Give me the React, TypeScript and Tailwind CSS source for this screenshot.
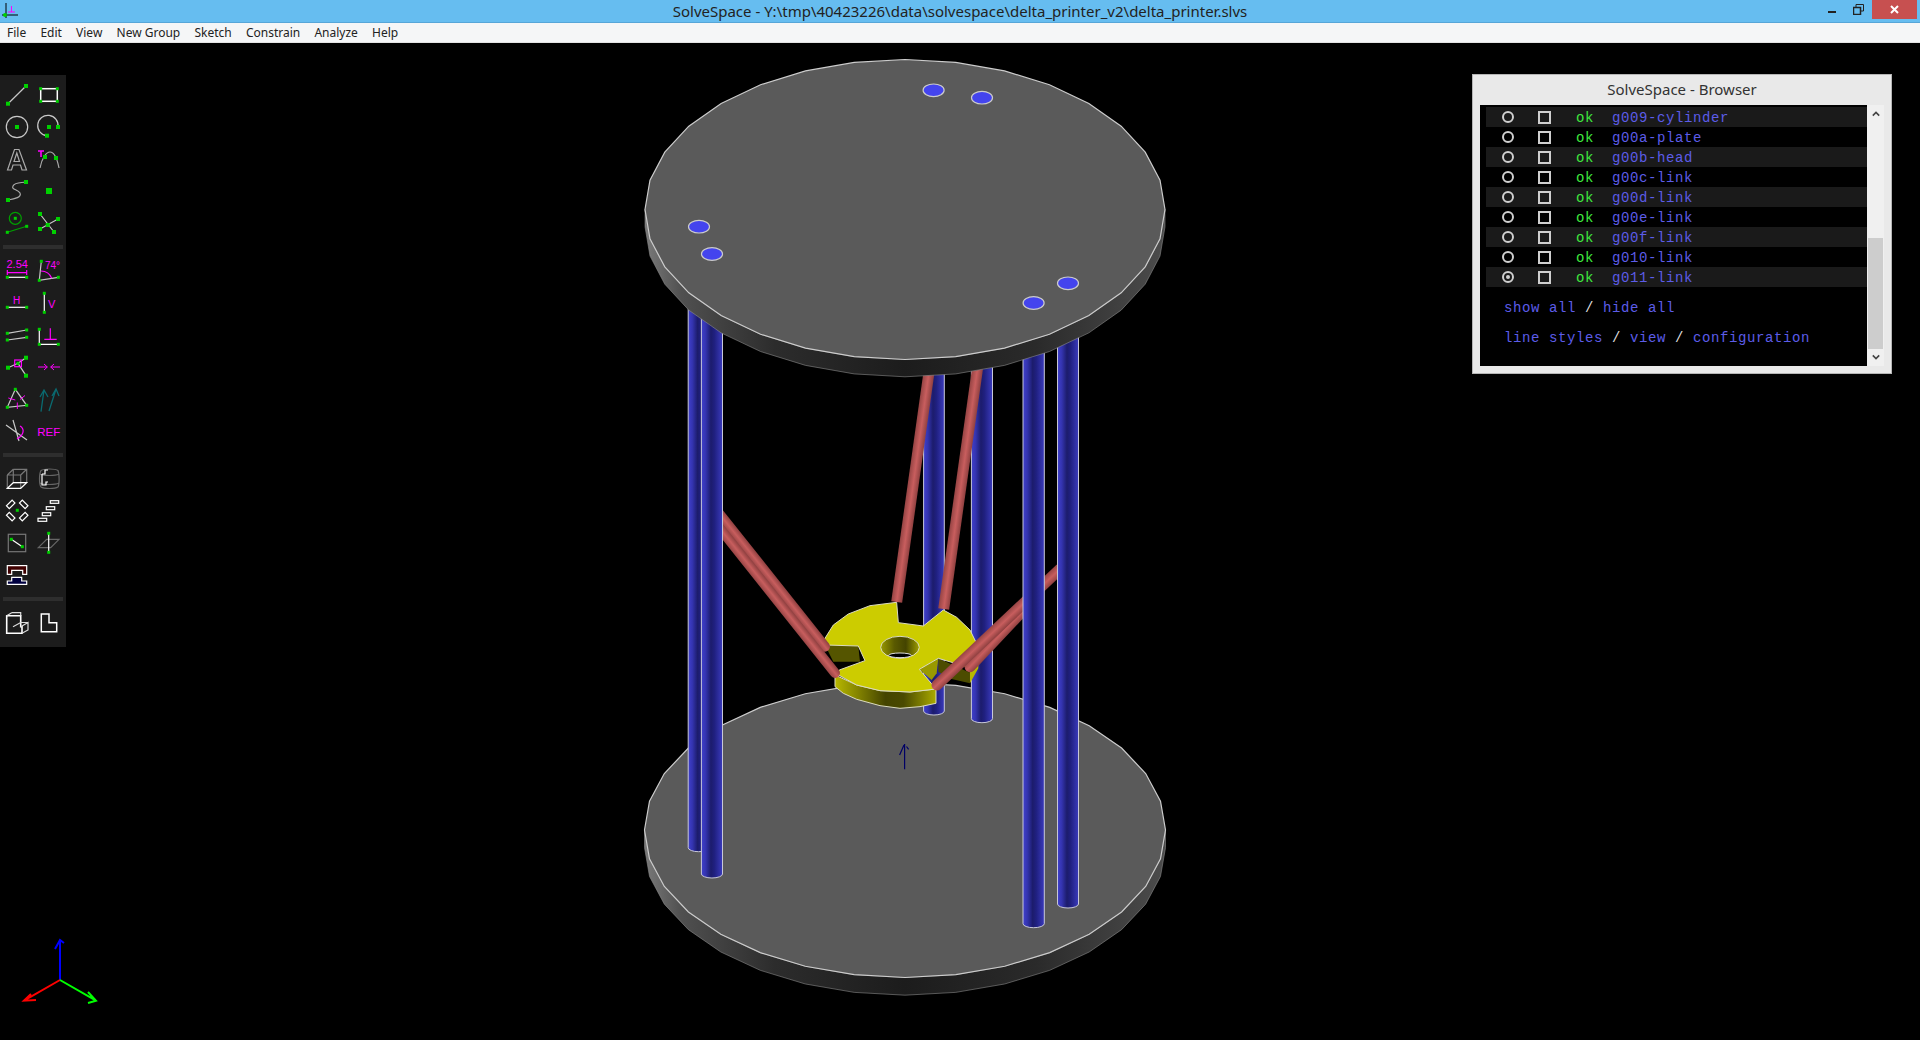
import type { ReactNode } from "react";

const MENUS = ["File", "Edit", "View", "New Group", "Sketch", "Constrain", "Analyze", "Help"];

const GROUPS = [
  "g009-cylinder",
  "g00a-plate",
  "g00b-head",
  "g00c-link",
  "g00d-link",
  "g00e-link",
  "g00f-link",
  "g010-link",
  "g011-link",
];

const GREEN = "#00d000";
const MAGENTA = "#ff00ff";
const LINE = "#c8c8c8";

// small green handle, centered on x,y
function P({ x, y, s = 4 }: { x: number; y: number; s?: number }) {
  return <rect x={x - s / 2} y={y - s / 2} width={s} height={s} fill={GREEN} stroke="none" />;
}

function Icon({ children }: { children: ReactNode }) {
  return (
    <svg viewBox="0 0 32 32" className="w-8 h-8 overflow-visible" fill="none" stroke={LINE} strokeWidth="1.2">
      {children}
    </svg>
  );
}

const sketchIcons = [
  <Icon key="line">
    <path d="M7 24.7 25 7" />
    <P x={7} y={24.7} />
    <P x={25} y={7} />
  </Icon>,
  <Icon key="rect">
    <rect x="7.7" y="9.7" width="16.6" height="12.6" stroke="#fff" strokeWidth="1.5" />
    <P x={7.7} y={9.7} s={3} />
    <P x={24.3} y={9.7} s={3} />
    <P x={7.7} y={22.3} s={3} />
    <P x={24.3} y={22.3} s={3} />
  </Icon>,
  <Icon key="circle">
    <circle cx="16" cy="16" r="10.7" />
    <P x={16} y={16} />
  </Icon>,
  <Icon key="arc">
    <path d="M25 16A10.2 10.2 0 1 0 14 24.7" />
    <P x={16} y={16} />
    <P x={25} y={16} />
    <P x={14} y={24.7} />
  </Icon>,
  <Icon key="text">
    <path d="M6.5 27 13.5 6.5h4.5L25.500 27h-4.500l-1.500-5h-7.500l-1.500 5Z" stroke="#aaa" />
    <path d="M13 18.500h5.500L15.800 10Z" stroke="#aaa" />
  </Icon>,
  <Icon key="image">
    <path d="M7 25C9 15 13 9 17 9S24 15 26 25" stroke="#aaa" />
    <path d="M5 8h6M8 8v6" stroke={MAGENTA} strokeWidth="1.6" />
    <P x={12} y={14} />
    <P x={23} y={15} />
  </Icon>,
  <Icon key="spline">
    <path d="M7 25C14 24 21 22 19 18C17 14 10 15 12 11C14 7 20 8 25 7" stroke="#aaa" />
    <P x={7} y={25} />
    <P x={25} y={7} />
  </Icon>,
  <Icon key="point">
    <P x={16} y={16} s={6} />
  </Icon>,
  <Icon key="workplane">
    <circle cx="14.300" cy="11.300" r="6" stroke="#00a000" />
    <path d="M6.300 25.300 25.700 19.300" stroke="#00a000" />
    <P x={14.3} y={11.3} s={3} />
    <P x={6.3} y={25.3} s={3} />
    <P x={25.7} y={19.3} s={3} />
  </Icon>,
  <Icon key="intersect">
    <path d="M7 7 21 25M25 12 7 22" />
    <P x={7} y={7} />
    <P x={25} y={12} />
    <P x={7} y={22} />
    <P x={21} y={25} />
    <P x={14.7} y={18} />
  </Icon>,
];

const constrainIcons = [
  <Icon key="dist">
    <text x="5.500" y="12" fontSize="11" fill={MAGENTA} stroke="none">2.54</text>
    <path d="M6.300 14v5M25.700 14v5M6.300 16.700h19.400" stroke={MAGENTA} />
    <path d="M6.300 21.300h19.400" stroke="#fff" />
    <P x={6.3} y={21.3} s={3} />
    <P x={25.7} y={21.3} s={3} />
  </Icon>,
  <Icon key="angle">
    <path d="M8.300 5.300 6.300 24.300 25.300 21.300" />
    <path d="M8 15C13 15 17 18 18.700 22.300" stroke={MAGENTA} />
    <text x="12" y="13" fontSize="10" fill={MAGENTA} stroke="none">74°</text>
    <P x={8.3} y={5.3} s={3} />
    <P x={6.3} y={24.3} s={3} />
    <P x={25.3} y={21.3} s={3} />
  </Icon>,
  <Icon key="h">
    <text x="12" y="16" fontSize="10" fill={MAGENTA} stroke="none">H</text>
    <path d="M6.300 19.300h19.400" stroke="#fff" />
    <P x={6.3} y={19.3} s={3} />
    <P x={25.7} y={19.3} s={3} />
  </Icon>,
  <Icon key="v">
    <path d="M11.300 5.300v19" stroke="#fff" />
    <text x="15" y="20" fontSize="11" fill={MAGENTA} stroke="none">V</text>
    <P x={11.3} y={5.3} s={3} />
    <P x={11.3} y={24.3} s={3} />
  </Icon>,
  <Icon key="parallel">
    <path d="M6.300 13.300 25.700 10M6.300 20 25.700 17.300" />
    <P x={6.3} y={13.3} s={3} />
    <P x={25.7} y={10} s={3} />
    <P x={6.3} y={20} s={3} />
    <P x={25.7} y={17.3} s={3} />
  </Icon>,
  <Icon key="perp">
    <path d="M6.300 9.300v15h19" stroke="#fff" />
    <path d="M11.300 19.300h12.400M17.300 8.300v11" stroke={MAGENTA} />
    <P x={6.3} y={9.3} s={3} />
    <P x={6.3} y={24.3} s={3} />
    <P x={25.3} y={24.3} s={3} />
  </Icon>,
  <Icon key="ptline">
    <path d="M7 15.700 17 11.300 25 5.700M17 11.300 25 23.700" />
    <rect x="13.700" y="8" width="6.700" height="6.700" stroke={MAGENTA} />
    <P x={17} y={11.300} s={3} />
    <P x={7} y={15.7} />
    <P x={25} y={5.7} />
    <P x={25} y={23.7} />
  </Icon>,
  <Icon key="same">
    <path d="M5 15h9.300M11 12l3.300 3-3.300 3M27 15h-9.300M21 12l-3.300 3 3.300 3" stroke={MAGENTA} strokeWidth="1" />
  </Icon>,
  <Icon key="symm">
    <path d="M14.300 5.300 6.300 23.300 25.700 21.300Z" />
    <path d="M7.300 14 14.300 16M19 15.500 24 11.500M16.300 18.500v6.500" stroke={MAGENTA} strokeWidth="1" />
    <P x={14.3} y={5.3} s={3} />
    <P x={6.3} y={23.3} s={3} />
    <P x={25.7} y={21.3} s={3} />
  </Icon>,
  <Icon key="orient">
    <path d="M8 27.700 11 6M7 13l4-7 4 7M16 27 23 5.300M19 12l4-7 3 7" stroke="#0a6a70" strokeWidth="1.300" />
  </Icon>,
  <Icon key="other">
    <path d="M5 9 26 24M12 4 18 25" />
    <path d="M19 10C24 13 23 19 16 23" stroke={MAGENTA} />
  </Icon>,
  <Icon key="ref">
    <text x="4.300" y="20" fontSize="11.500" fill={MAGENTA} stroke="none">REF</text>
  </Icon>,
];

const groupIcons = [
  <Icon key="extrude">
    <path d="M12.300 7.300h13.400v13.400M12.300 7.300v13.400h13.400M6.300 13 12.300 7.300M19.700 13 25.700 7.300M6.300 13h13.400v13.300M6.300 13v13.300" stroke="#777" />
    <path d="M6.300 26.300h13.400l6-5.600H12.300Z" stroke="#fff" />
  </Icon>,
  <Icon key="lathe">
    <path d="M8 8.500C11 6.500 22 6.500 25 8.500C26.500 12 26.500 22 25 25C22 27 11 27 8 25C6 22 6 12 8 8.500ZM7 12C11 14 22 14 26 12M7 21C11 23 22 23 26 21" stroke="#666" />
    <path d="M9 12h3v-4h3M9 12v11h4v-3h2" stroke="#fff" />
  </Icon>,
  <Icon key="rotate">
    <g stroke="#fff">
      <rect x="5.700" y="8.300" width="8" height="4" transform="rotate(-45 9.700 10.300)" />
      <rect x="18.700" y="8.300" width="8" height="4" transform="rotate(45 22.700 10.300)" />
      <rect x="5.700" y="20.700" width="8" height="4" transform="rotate(45 9.700 22.700)" />
      <rect x="18.700" y="20.700" width="8" height="4" transform="rotate(-45 22.700 22.700)" />
    </g>
    <P x={16.3} y={16.3} s={3} />
  </Icon>,
  <Icon key="translate">
    <g stroke="#fff">
      <rect x="17.300" y="6.700" width="8.400" height="2.600" />
      <rect x="13.300" y="12.700" width="8.400" height="3" />
      <rect x="9.300" y="18.700" width="8.400" height="3" />
      <rect x="5" y="24.300" width="8.700" height="3" />
    </g>
  </Icon>,
  <Icon key="plane">
    <rect x="7.300" y="8.300" width="17.400" height="17.400" stroke="#777" />
    <path d="M10.300 13.300 21.300 20.700" stroke="#fff" />
    <P x={10.3} y={13.3} s={3} />
    <P x={21.3} y={20.7} s={3} />
  </Icon>,
  <Icon key="normal">
    <path d="M5.300 21.700 13.700 13.300H26L17.700 21.700Z" stroke="#666" />
    <path d="M15.700 7.300v19" stroke="#fff" />
    <P x={15.7} y={7.3} s={3} />
    <P x={15.7} y={26.3} s={3} />
  </Icon>,
  <Icon key="section">
    <path d="M6.300 7.700H25.700V16.300H21.700V12.300H10.700V16.300H6.300Z" fill="#400000" stroke="#fff" />
    <path d="M10.700 19.300H20.700V23H25.700V26.300H6.300V23H10.700Z" fill="#000040" stroke="#fff" />
  </Icon>,
];

const viewIcons = [
  <Icon key="solid">
    <path d="M5.700 8.700H19.700V19.700H21V26.300H5.700Z" stroke="#fff" strokeWidth="1.600" />
    <path d="M10.700 5.700H19.700V8.700M5.700 8.700 10.700 5.700M19.700 19.700 27 15.500V23L21 26.300M12 19.700 19.700 15.500H27" stroke="#ddd" />
  </Icon>,
  <Icon key="shape">
    <path d="M8.300 7H16V15.700H23.700V24.700H8.300Z" stroke="#fff" strokeWidth="1.500" />
  </Icon>,
];

function ToolRow({ icons }: { icons: ReactNode[] }) {
  return <div className="grid grid-cols-2 w-16">{icons}</div>;
}

function Toolbar() {
  return (
    <div className="absolute left-0 top-[32px] w-[66px] h-[572px] bg-[#1c1c1c] pl-px pt-1 font-['Liberation_Sans',sans-serif]">
      <ToolRow icons={sketchIcons} />
      <div className="ml-[2px] w-[60px] h-1 bg-[#2e2e2e] mt-[6px] mb-[7px]" />
      <ToolRow icons={constrainIcons} />
      <div className="ml-[2px] w-[60px] h-1 bg-[#2e2e2e] mt-[5px] mb-[5px]" />
      <ToolRow icons={groupIcons} />
      <div className="ml-[2px] w-[60px] h-1 bg-[#2e2e2e] mt-[7px] mb-[6px]" />
      <ToolRow icons={viewIcons} />
    </div>
  );
}

function BrowserWindow() {
  return (
    <div className="absolute left-[1472px] top-[31px] w-[420px] h-[300px] bg-[#e9e9e9] border border-[#b5b5b5] flex flex-col font-['Noto_Sans',sans-serif]">
      <div className="h-[30px] pb-[2px] flex items-center justify-center text-[15px] text-[#333]">SolveSpace - Browser</div>
      <div className="mx-[7px] h-[261px] flex bg-black font-['Liberation_Mono',monospace] text-[14px] tracking-[0.6px]">
        <div className="flex-1 pt-[2px]">
          {GROUPS.map((name, i) => (
            <div key={name} className={`ml-[6px] h-5 flex items-center ${i % 2 === 0 ? "bg-[#1a1a1a]" : "bg-black"}`}>
              <div className="ml-[16px] w-3 h-3 rounded-full border-2 border-[#cfcfcf] flex items-center justify-center">
                {name === "g011-link" && <div className="w-1 h-1 rounded-full bg-[#cfcfcf]" />}
              </div>
              <div className="ml-[24px] w-[13px] h-[13px] border-2 border-[#cfcfcf]" />
              <span className="ml-[25px] w-9 pt-[2px] text-[#3ee83e]">ok</span>
              <span className="pt-[2px] text-[#5c5ce8]">{name}</span>
            </div>
          ))}
          <div className="mt-[11px] ml-6 h-[20px] leading-[20px] text-[#5c5ce8]">
            show all <span className="text-[#ddd]">/</span> hide all
          </div>
          <div className="mt-[10px] ml-6 h-[20px] leading-[20px] text-[#5c5ce8]">
            line styles <span className="text-[#ddd]">/</span> view <span className="text-[#ddd]">/</span> configuration
          </div>
        </div>
        <div className="w-[17px] bg-[#f0f0f0] flex flex-col items-center justify-between py-[6px] relative">
          <svg viewBox="0 0 10 6" className="w-2 h-[6px]" fill="none" stroke="#444" strokeWidth="2"><path d="M1 5 5 1 9 5" /></svg>
          <div className="absolute left-px top-[133px] w-[15px] h-[111px] bg-[#cdcdcd]" />
          <svg viewBox="0 0 10 6" className="w-2 h-[6px]" fill="none" stroke="#444" strokeWidth="2"><path d="M1 1 5 5 9 1" /></svg>
        </div>
      </div>
    </div>
  );
}

// regular 32-gon flattened to an ellipse, as the solid model tessellates it
function ring(cx: number, cy: number, rx: number, ry: number) {
  return Array.from({ length: 32 }, (_, i) => {
    const a = (i * Math.PI) / 16;
    return [cx + rx * Math.sin(a), cy + ry * Math.cos(a)];
  });
}

function Disc({ cx, cy, rx, ry, h }: { cx: number; cy: number; rx: number; ry: number; h: number }) {
  const pts = ring(cx, cy, rx, ry);
  const lower = pts.filter((_, i) => i <= 8 || i >= 24).sort((a, b) => a[0] - b[0]);
  const side = [...lower, ...[...lower].reverse().map(([x, y]) => [x, y + h])];
  return (
    <g>
      <polygon points={side.map((p) => p.join(",")).join(" ")} fill="url(#discSide)" stroke="#8a8a8a" strokeWidth="0.6" />
      <polygon points={pts.map((p) => p.join(",")).join(" ")} fill="#5a5a5a" stroke="#ccc" strokeWidth="1.200" />
    </g>
  );
}

function Cylinder({ x0, x1, bottom }: { x0: number; x1: number; bottom: number }) {
  return (
    <path
      d={`M${x0} 300V${bottom - 4}A${(x1 - x0) / 2} 4 0 0 0 ${x1} ${bottom - 4}V300Z`}
      fill="url(#cyl)"
      stroke="#c8c8d8"
      strokeWidth="1"
    />
  );
}

function Rod({ id, x1, y1, x2, y2, w = 11, cap = "round" }: { id: string; x1: number; y1: number; x2: number; y2: number; w?: number; cap?: "round" | "butt" }) {
  const len = Math.hypot(x2 - x1, y2 - y1);
  const nx = (-(y2 - y1) / len) * (w / 2);
  const ny = ((x2 - x1) / len) * (w / 2);
  return (
    <g>
      <linearGradient id={id} gradientUnits="userSpaceOnUse" x1={x1 + nx} y1={y1 + ny} x2={x1 - nx} y2={y1 - ny}>
        <stop offset="0" stopColor="#8f4040" />
        <stop offset="0.5" stopColor="#c85e5e" />
        <stop offset="1" stopColor="#964444" />
      </linearGradient>
      <line x1={x1} y1={y1} x2={x2} y2={y2} stroke={`url(#${id})`} strokeWidth={w} strokeLinecap={cap} />
    </g>
  );
}

function Head() {
  const edge = { stroke: "#dcdcc0", strokeWidth: 3 };
  return (
    <g transform="translate(780 540) scale(0.3333)" strokeLinejoin="round">
      <polygon points="165,405 165,440 190,460 230,478 300,497 360,505 420,500 468,490 468,447 390,456 300,452 230,435" fill="url(#headSide)" {...edge} />
      <polygon points="135,315 235,318 240,365 160,365" fill="#555500" />
      <polygon points="418,388 475,355 470,400 455,420" fill="#999900" />
      <polygon points="475,355 570,398 570,430 505,415 475,395" fill="#4c4c00" />
      <polygon points="552,378 596,345 595,385 570,430 570,398" fill="#b8b800" />
      <polygon
        points="350,187 270,197 205,222 160,255 133,298 135,315 235,318 255,362 178,390 170,402 230,435 300,452 390,456 468,447 418,388 475,355 552,378 596,335 592,315 570,270 530,232 490,210 430,258 355,248"
        fill="#cccc00"
        {...edge}
      />
      <ellipse cx="360" cy="322" rx="58" ry="33" fill="url(#headHole)" {...edge} />
      <ellipse cx="360" cy="346" rx="34" ry="7" fill="#000" stroke="#ddd" strokeWidth="3" />
    </g>
  );
}

function Scene() {
  const holes = [
    [933.6, 90.3],
    [982, 97.7],
    [699, 226.7],
    [712, 254],
    [1068, 283.3],
    [1033.6, 303],
  ];
  return (
    <svg viewBox="0 43 1920 997" className="absolute inset-0 w-full h-full">
      <defs>
        <linearGradient id="discSide">
          <stop offset="0" stopColor="#7a7a7a" />
          <stop offset="0.07" stopColor="#505050" />
          <stop offset="0.25" stopColor="#2c2c2c" />
          <stop offset="0.5" stopColor="#1c1c1c" />
          <stop offset="0.75" stopColor="#2a2a2a" />
          <stop offset="1" stopColor="#4c4c4c" />
        </linearGradient>
        <linearGradient id="cyl">
          <stop offset="0" stopColor="#4040cc" />
          <stop offset="0.2" stopColor="#3434b0" />
          <stop offset="0.45" stopColor="#1c1c6c" />
          <stop offset="0.62" stopColor="#202080" />
          <stop offset="1" stopColor="#3a3abc" />
        </linearGradient>
        <linearGradient id="headSide">
          <stop offset="0" stopColor="#b8b800" />
          <stop offset="0.5" stopColor="#444400" />
          <stop offset="0.68" stopColor="#4a4a00" />
          <stop offset="1" stopColor="#aaaa00" />
        </linearGradient>
        <linearGradient id="headHole">
          <stop offset="0" stopColor="#9a9a00" />
          <stop offset="0.35" stopColor="#5a5a00" />
          <stop offset="0.65" stopColor="#444400" />
          <stop offset="1" stopColor="#a0a000" />
        </linearGradient>
      </defs>

      <Disc cx={905} cy={830} rx={260.5} ry={147.5} h={17.7} />
      <path d="M904.600 769.300V744M899.600 755 904 745M906.500 746.500 908.600 749.300" stroke="#000066" strokeWidth="1.200" fill="none" />

      <Cylinder x0={923.6} x1={944.3} bottom={715} />
      <Cylinder x0={971.4} x1={992.5} bottom={722.7} />
      <Head />

      <Rod id="rodA" x1={896.7} y1={602} x2={930} y2={365} cap="butt" />
      <Rod id="rodB" x1={943.7} y1={609} x2={978} y2={365} cap="butt" />
      <Rod id="rodC" x1={825} y1={646.7} x2={718} y2={512} w={10} />
      <Rod id="rodD" x1={835} y1={673} x2={718} y2={526} w={10} />
      <Rod id="rodF" x1={970} y1={666.7} x2={1030} y2={603} />
      <Rod id="rodE" x1={937} y1={685} x2={1060} y2={569} />

      <Cylinder x0={688.2} x1={709} bottom={851.7} />
      <Cylinder x0={701.4} x1={722.5} bottom={878} />
      <Cylinder x0={1057.5} x1={1078.5} bottom={908} />
      <Cylinder x0={1023} x1={1044.3} bottom={927.7} />

      <Disc cx={905} cy={209.500} rx={260} ry={150} h={17.3} />
      {holes.map(([x, y]) => (
        <ellipse key={x} cx={x} cy={y} rx={10.500} ry={6.300} fill="#4444ee" stroke="#ccc" strokeWidth="1.200" />
      ))}

      <g fill="none" strokeWidth="2">
        <path d="M60 980V940M55 949 60 940 64 943" stroke="#0000ff" />
        <path d="M60 980 24 1000.700M31 994 24 1000.700 36 1000" stroke="#ff0000" />
        <path d="M60 980 96 1000.700M88 992 96 1000.700 88 1003" stroke="#00ff00" />
      </g>
    </svg>
  );
}

export default function App() {
  return (
    <div className="w-[1920px] h-[1040px] flex flex-col bg-black overflow-hidden font-['Noto_Sans',sans-serif]">
      {/* title bar */}
      <div className="h-[23px] shrink-0 bg-[#66bdf0] border-b border-[#57a6d8] flex items-center relative">
        <svg viewBox="0 0 20 20" className="absolute left-0 top-0 w-5 h-5" fill="none" strokeWidth="1">
          <path d="M6 3v15M2 15h16" stroke="#000" />
          <path d="M8 12h7M11.500 6v6" stroke={MAGENTA} />
          <circle cx="5" cy="15" r="2" fill="#00d000" />
        </svg>
        <div className="w-full text-center text-[15px] leading-[22px] text-[#222]">
          {"SolveSpace - Y:\\tmp\\40423226\\data\\solvespace\\delta_printer_v2\\delta_printer.slvs"}
        </div>
        <div className="absolute left-[1828px] top-[11px] w-2 h-[2px] bg-[#222]" />
        <svg viewBox="0 0 11 11" className="absolute left-[1853px] top-1 w-[11px] h-[11px]" fill="none" stroke="#222" strokeWidth="1">
          <rect x="0.500" y="3.500" width="7" height="7" strokeWidth="1.500" />
          <path d="M3 3V.5h7.500V7H8" />
        </svg>
        <div className="absolute left-[1872px] top-0 w-[45px] h-[19px] bg-[#c75050] flex items-center justify-center">
          <svg viewBox="0 0 9 9" className="w-[9px] h-[9px]" stroke="#fff" strokeWidth="2"><path d="M1 1 8 8M8 1 1 8" /></svg>
        </div>
      </div>

      {/* menu bar */}
      <div className="h-5 shrink-0 bg-[#f5f6f7] border-b border-[#e3e3e3] flex items-center gap-[14.2px] pl-[7px] text-[12px] text-[#222]">
        {MENUS.map((m) => (
          <span key={m}>{m}</span>
        ))}
      </div>

      {/* canvas */}
      <div className="relative flex-1">
        <Scene />
        <Toolbar />
        <BrowserWindow />
      </div>
    </div>
  );
}
